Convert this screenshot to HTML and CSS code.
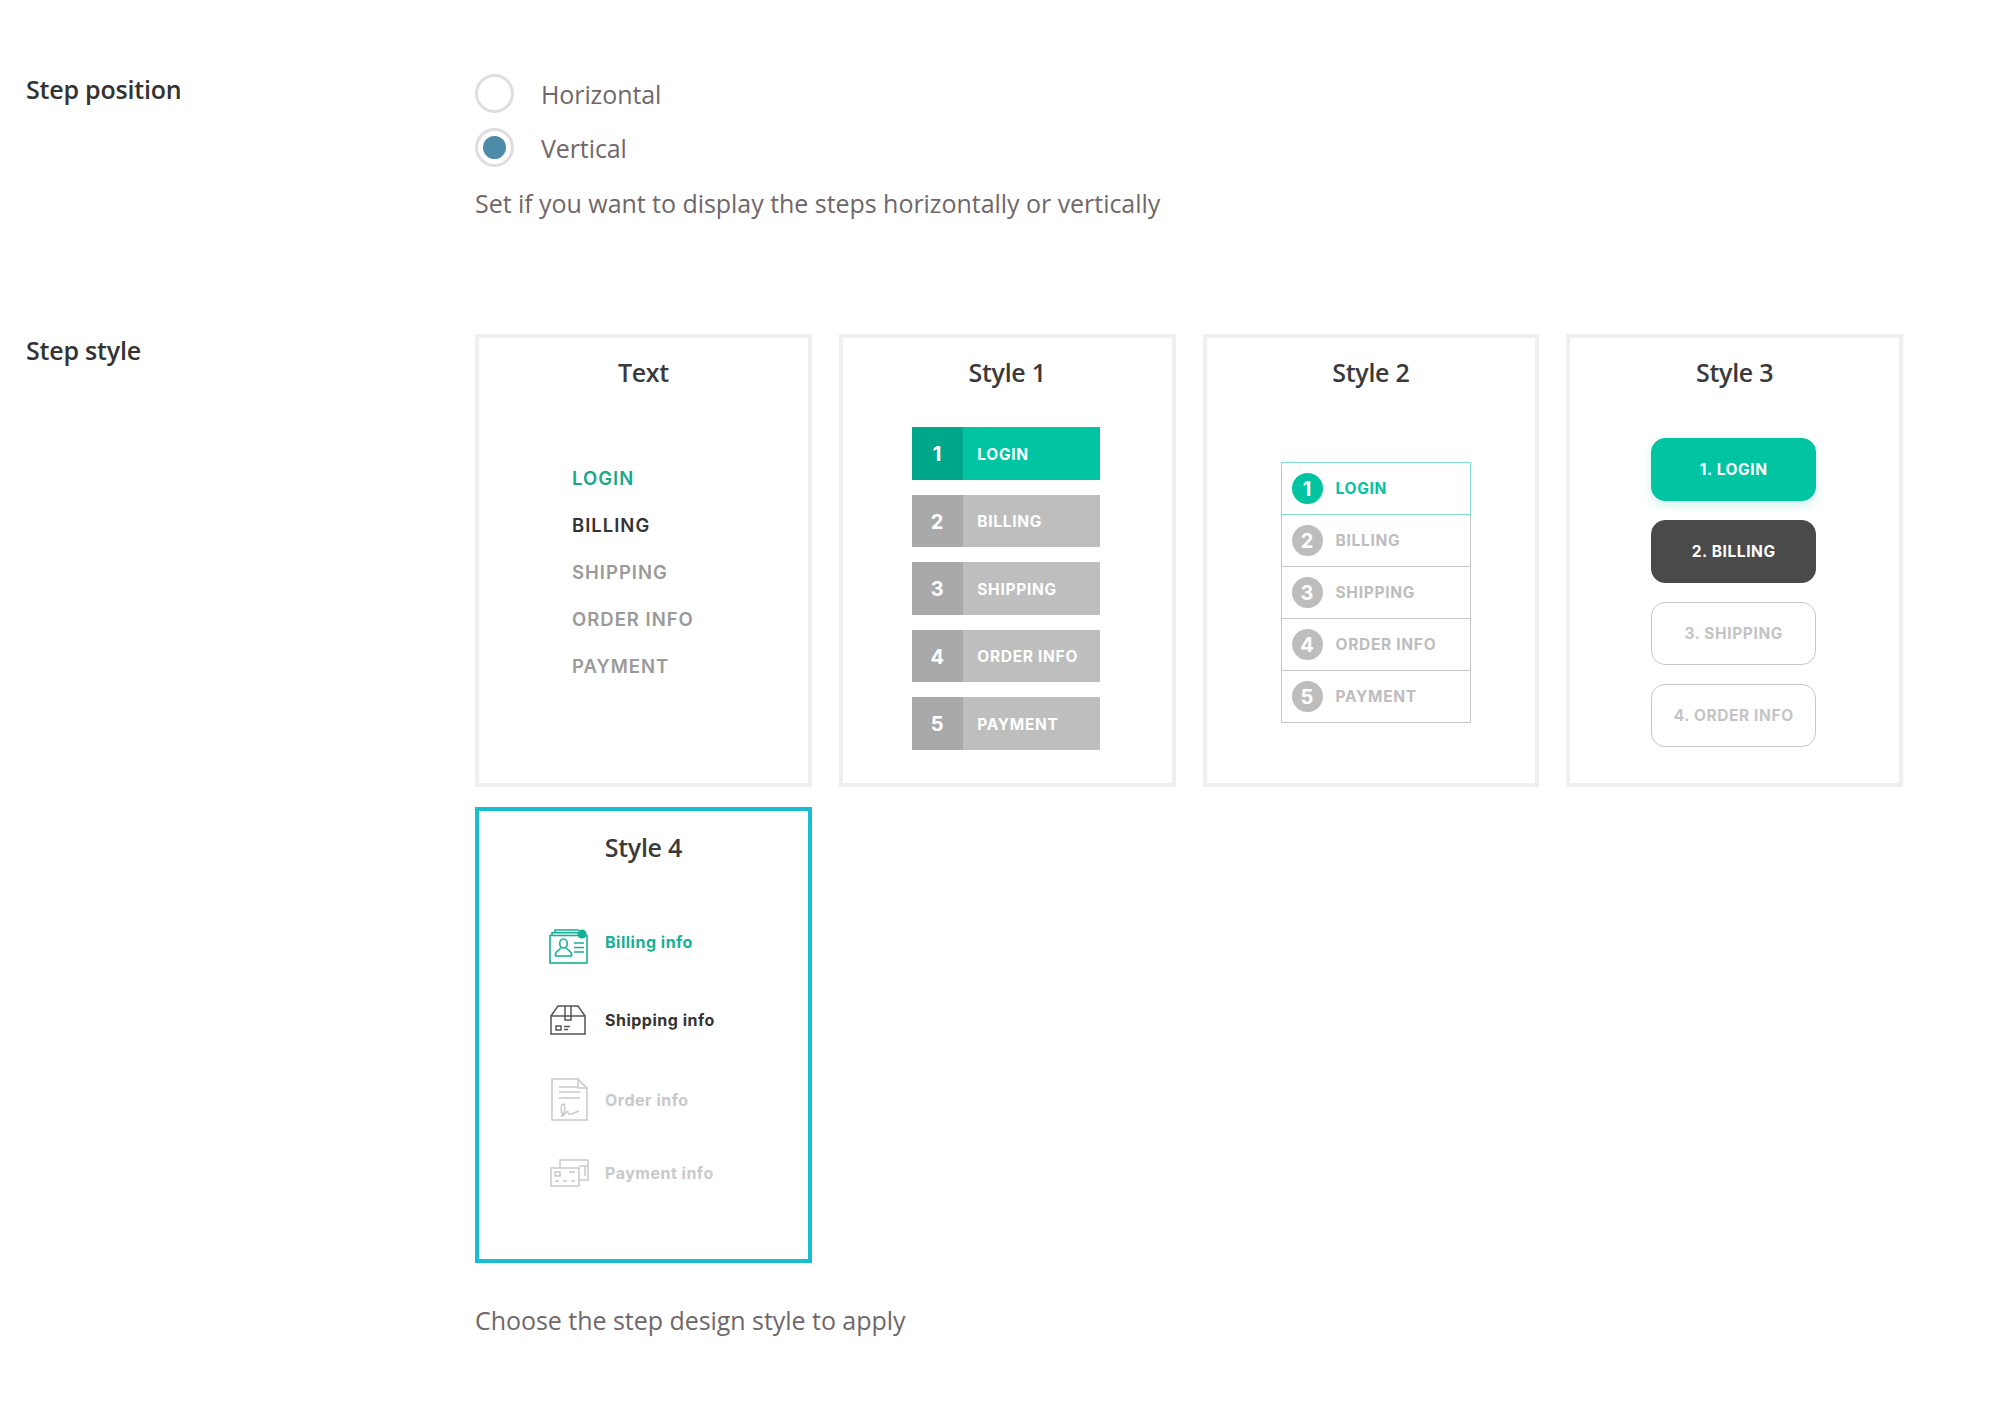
FILE: index.html
```html
<!DOCTYPE html>
<html lang="en">
<head>
<meta charset="utf-8">
<title>Step settings</title>
<link rel="stylesheet" href="styles.css">
</head>
<body>
<main class="page">
  <section class="setting setting-position">
    <h2 class="setting-label">Step position</h2>
    <div class="setting-control">
      <div class="radios">
        <label class="radio"><span class="radio-dot"></span>Horizontal</label>
        <label class="radio is-on"><span class="radio-dot"></span>Vertical</label>
      </div>
      <p class="desc desc-position">Set if you want to display the steps horizontally or vertically</p>
    </div>
  </section>
  <section class="setting">
    <h2 class="setting-label">Step style</h2>
    <div class="setting-control">
      <div class="cards">
        <article class="card">
          <h3 class="card-title">Text</h3>
          <ul class="text-steps">
            <li class="green">LOGIN</li>
            <li class="dark">BILLING</li>
            <li>SHIPPING</li>
            <li>ORDER INFO</li>
            <li>PAYMENT</li>
          </ul>
        </article>
        <article class="card">
          <h3 class="card-title">Style 1</h3>
          <ul class="bars">
            <li class="bar is-active"><span class="bar-num">1</span><span class="bar-text">LOGIN</span></li>
            <li class="bar"><span class="bar-num">2</span><span class="bar-text">BILLING</span></li>
            <li class="bar"><span class="bar-num">3</span><span class="bar-text">SHIPPING</span></li>
            <li class="bar"><span class="bar-num">4</span><span class="bar-text">ORDER INFO</span></li>
            <li class="bar"><span class="bar-num">5</span><span class="bar-text">PAYMENT</span></li>
          </ul>
        </article>
        <article class="card">
          <h3 class="card-title">Style 2</h3>
          <ul class="rows">
            <li class="row is-active"><span class="row-num">1</span><span>LOGIN</span></li>
            <li class="row"><span class="row-num">2</span><span>BILLING</span></li>
            <li class="row"><span class="row-num">3</span><span>SHIPPING</span></li>
            <li class="row"><span class="row-num">4</span><span>ORDER INFO</span></li>
            <li class="row"><span class="row-num">5</span><span>PAYMENT</span></li>
          </ul>
        </article>
        <article class="card">
          <h3 class="card-title">Style 3</h3>
          <ul class="pills">
            <li class="pill pill-green">1. LOGIN</li>
            <li class="pill pill-dark">2. BILLING</li>
            <li class="pill">3. SHIPPING</li>
            <li class="pill">4. ORDER INFO</li>
          </ul>
        </article>
        <article class="card card-selected">
          <h3 class="card-title">Style 4</h3>
          <ul class="icon-steps">
            <li class="icon-step icon-step-billing">
              <svg class="icon" width="39" height="36" viewBox="0 0 39 36" fill="none" stroke="currentColor" stroke-width="1.6">
                <path d="M6 4.5V2H30M3 7.5V4.8H30"/>
                <rect x="1" y="7.5" width="37" height="27.5"/>
                <ellipse cx="14.5" cy="15.5" rx="3.8" ry="4.5"/>
                <path d="M11.8 19.5C11.5 22 6.5 23 6.5 26V28H22.5V26C22.5 23 17.5 22 17.2 19.5"/>
                <path d="M25 15H35M25 19.5H35M25 24H35"/>
                <circle cx="33" cy="6" r="4.6" fill="currentColor" stroke="none"/>
              </svg>
              <span>Billing info</span>
            </li>
            <li class="icon-step icon-step-shipping">
              <svg class="icon" width="36" height="30" viewBox="0 0 36 30" fill="none" stroke="currentColor" stroke-width="1.5">
                <path d="M1 11H35V29H1ZM1 11L8 1H28L35 11"/>
                <path d="M15 1V15H21V1"/>
                <rect x="6" y="21" width="5" height="4"/>
                <path d="M14 21.5H20M14 24.5H18"/>
              </svg>
              <span>Shipping info</span>
            </li>
            <li class="icon-step icon-step-order">
              <svg class="icon" width="37" height="43" viewBox="0 0 37 43" fill="none" stroke="currentColor" stroke-width="1.5">
                <path d="M1 1H27L36 10V42H1Z"/>
                <path d="M27 1V10H36"/>
                <path d="M8 9H26M8 14H29M8 20H29"/>
                <path d="M12 38C9 33 10 26 12.5 26C15 27 14 34 11 38C15 37 15 32 17 34C17 37 19 37 28 33"/>
              </svg>
              <span>Order info</span>
            </li>
            <li class="icon-step icon-step-payment">
              <svg class="icon" width="39" height="28" viewBox="0 0 39 28" fill="none" stroke="currentColor" stroke-width="1.5">
                <rect x="1" y="9" width="28" height="18"/>
                <path d="M10 9V1H38V21H29M29 7H38M35 7V17"/>
                <rect x="5" y="13" width="5" height="4"/>
                <path d="M19 13H25M5 22H9M13 22H17M21 22H25"/>
              </svg>
              <span>Payment info</span>
            </li>
          </ul>
        </article>
      </div>
      <p class="desc desc-style">Choose the step design style to apply</p>
    </div>
  </section>
</main>
</body>
</html>
```
FILE: styles.css
```css
* { box-sizing: border-box; }
html, body { margin: 0; padding: 0; background: #fff; }
body { font-family: "Open Sans", "Noto Sans", sans-serif; color: #333; }
ul { list-style: none; margin: 0; padding: 0; }
h2, h3, p { margin: 0; font-weight: 400; }

.page { padding: 73px 0 0 25px; width: 2014px; height: 1424px; overflow: hidden; }
.setting { display: flex; }
.setting-position { margin-bottom: 114px; }
.setting-label { width: 450px; flex: none; padding-left: 1px; font-size: 25px; line-height: 33px; font-weight: 600; color: #333; letter-spacing: -0.2px; }
.setting-control { width: 1428px; }

.radios { display: flex; flex-direction: column; gap: 15px; margin-top: 1px; }
.radio { display: flex; align-items: center; gap: 27px; height: 39px; font-size: 25px; line-height: 38px; color: #6f6769; letter-spacing: -0.1px; }
.radio-dot { width: 39px; height: 39px; border: 3px solid #dedede; border-radius: 50%; display: flex; align-items: center; justify-content: center; }
.is-on .radio-dot::after { content: ""; width: 23px; height: 23px; border-radius: 50%; background: #4d8ba8; }
.desc { font-size: 25px; line-height: 34px; color: #6f6769; letter-spacing: -0.04px; }
.desc-position { margin-top: 19px; }
.desc-style { margin-top: 40px; }

.cards { display: grid; grid-template-columns: repeat(4, 1fr); grid-template-rows: 453px 456px; gap: 20px 27px; }
.card { border: 4px solid #efefef; padding-top: 17px; font-family: "Inter", "Liberation Sans", sans-serif; }
.card-title { font-family: "Open Sans", sans-serif; font-size: 25px; line-height: 34px; font-weight: 600; text-align: center; color: #3a3a3a; letter-spacing: -0.3px; }
.card-selected { border-color: #17bed2; padding-top: 19px; }

.text-steps { margin: 66px 0 0 93px; font-size: 18.5px; font-weight: 600; color: #9a9a9a; letter-spacing: 1px; }
.text-steps li { height: 47px; line-height: 47px; }
.text-steps .green { color: #18a88c; }
.text-steps .dark { color: #333; }

.bars { width: 188px; margin: 38px 0 0 69px; display: flex; flex-direction: column; gap: 15px; }
.bar { height: 52.5px; display: flex; align-items: center; gap: 14px; background: #bebebe; color: #fff; font-size: 15.5px; font-weight: 700; letter-spacing: 0.7px; }
.bar-num { width: 51.5px; height: 100%; padding-top: 2px; display: flex; align-items: center; justify-content: center; background: #a9a9a9; font-size: 20px; }
.bar-text { padding-top: 2px; }
.bar.is-active { background: #00c4a2; }
.bar.is-active .bar-num { background: #00a88b; }

.rows { width: 190px; margin: 74px 0 0 74px; }
.row { height: 53px; margin-top: -1px; border: 1.5px solid #c6c6c6; display: flex; align-items: center; gap: 13px; padding-left: 10px; color: #bdbdbd; font-size: 15.5px; font-weight: 700; letter-spacing: 0.7px; }
.row-num { width: 31px; height: 31px; border-radius: 50%; background: #bdbdbd; color: #fff; display: flex; align-items: center; justify-content: center; font-size: 20px; letter-spacing: 0; }
.row.is-active { position: relative; border-color: #7fe0cf; color: #00c4a2; }
.row.is-active .row-num { background: #00c4a2; }

.pills { width: 165px; margin: 49px 0 0 81px; display: flex; flex-direction: column; gap: 19.6px; }
.pill { height: 62.5px; border: 1.5px solid #c8c8c8; border-radius: 14px; display: flex; align-items: center; justify-content: center; color: #c4c4c4; font-size: 15.5px; font-weight: 700; letter-spacing: 0.6px; }
.pill-green { background: #00c4a2; border-color: #00c4a2; color: #fff; box-shadow: 0 4px 10px rgba(0,196,162,.2); }
.pill-dark { background: #4a4a4a; border-color: #4a4a4a; color: #fff; }

.icon-steps { margin: 64px 0 0 70px; font-size: 16px; font-weight: 700; letter-spacing: 0.5px; color: #c9c9c9; }
.icon-step { display: flex; align-items: center; position: relative; }
.icon-step span { position: absolute; left: 56px; }
.icon { display: block; flex: none; }
.icon-step-billing { color: #16b096; height: 36px; }
.icon-step-billing span { top: 4px; }
.icon-step-shipping { color: #333; height: 30px; margin-top: 41px; margin-left: 1px; }
.icon-step-shipping span { left: 55px; }
.icon-step-shipping .icon { color: #555; }
.icon-step-order { height: 43px; margin-top: 43px; margin-left: 2px; }
.icon-step-order span { left: 54px; }
.icon-step-payment { height: 28px; margin-top: 38px; margin-left: 1px; }
.icon-step-payment span { left: 55px; }
```
